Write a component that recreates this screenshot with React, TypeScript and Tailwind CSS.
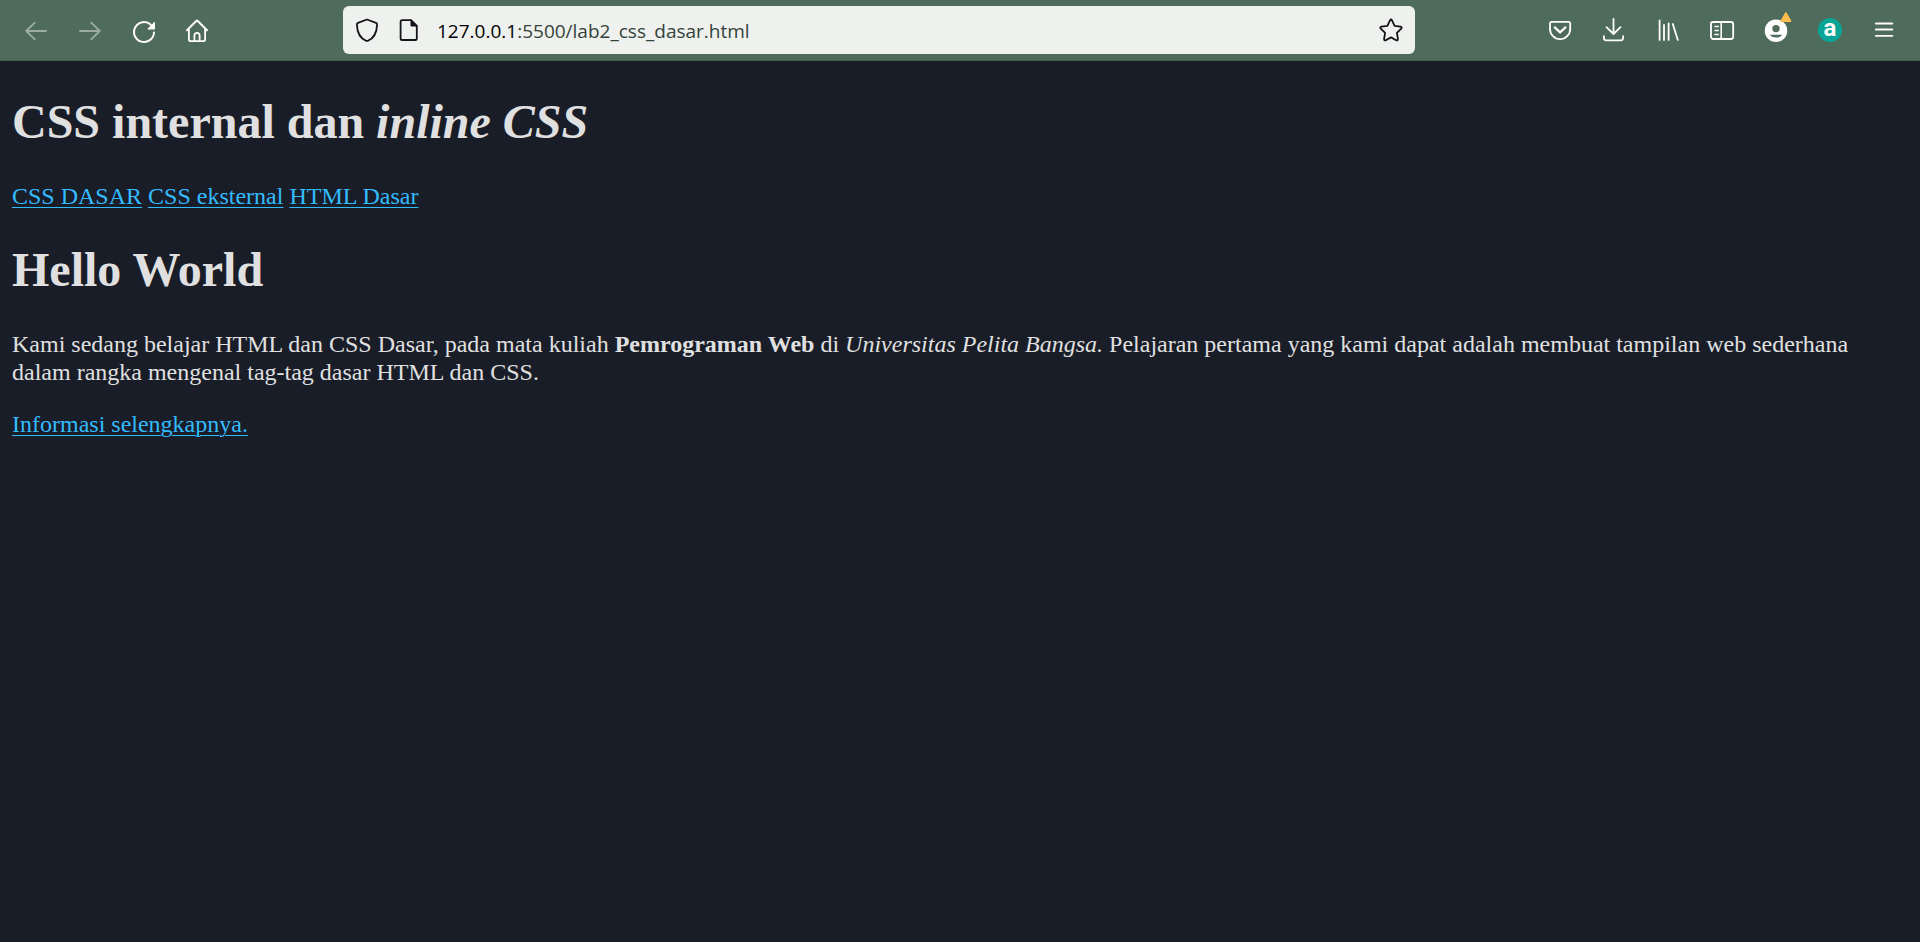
import type { ReactNode } from "react";

function Icon({ children }: { children: ReactNode }) {
  return (
    <svg
      viewBox="0 0 24 24"
      className="size-6 shrink-0 overflow-visible"
      fill="none"
      stroke="currentColor"
      strokeWidth="1.8"
      strokeLinecap="round"
      strokeLinejoin="round"
      aria-hidden="true"
    >
      {children}
    </svg>
  );
}

function ToolButton({ label, disabled, children }: { label: string; disabled?: boolean; children: ReactNode }) {
  return (
    <button
      type="button"
      aria-label={label}
      disabled={disabled}
      className="flex h-12 w-[54px] items-center justify-center text-white disabled:text-[#9bada2]"
    >
      {children}
    </button>
  );
}

function BrowserBar() {
  return (
    <header className="flex h-[61px] items-center border-b border-[#465f50] bg-[#4f6b5b] px-[9px]">
      <nav aria-label="Browser navigation" className="flex">
        <ToolButton label="Back" disabled>
          <Icon>
            <path d="M22 13H2.2M10.8 4.6 2.2 13l8.600 8.400" />
          </Icon>
        </ToolButton>
        <ToolButton label="Forward" disabled>
          <Icon>
            <path d="M2 13h19.800M13.200 4.600 21.800 13l-8.600 8.400" />
          </Icon>
        </ToolButton>
        <ToolButton label="Reload">
          <Icon>
            <path d="M22 14.500A10 10 0 1 1 18.800 6.700" strokeWidth="2" />
            <path d="M22.400 4.600v6.200h-6.200z" fill="currentColor" strokeWidth="1.200" />
          </Icon>
        </ToolButton>
        <ToolButton label="Home">
          <Icon>
            <path d="M1 12.200 10.200 3Q11 2.200 11.800 3L21 12.200" strokeWidth="2" />
            <path d="M2.900 11v10.600q0 1.600 1.600 1.600h13q1.600 0 1.600-1.600V11" />
            <path d="M8.400 23v-5.600a2.600 2.600 0 0 1 5.200 0V23" />
          </Icon>
        </ToolButton>
      </nav>

      <div className="flex-[118]" />
      <form
        className="flex h-12 min-w-0 flex-[1048] items-center rounded-md bg-[#eff1ee] px-3 text-[#15141a]"
        onSubmit={(event) => event.preventDefault()}
      >
        <Icon>
          <path
            d="M12 1.500 21 4.800Q22.200 5.300 22.100 6.600C21.800 14.500 18.500 20.500 12.800 22.800Q12 23.100 11.200 22.800C5.500 20.500 2.200 14.500 1.900 6.600Q1.800 5.300 3 4.800Z"
          />
        </Icon>
        <span className="ml-[18px] flex">
          <Icon>
            <path d="M14 2.200H5.200Q3.600 2.200 3.600 3.800v16.600q0 1.600 1.600 1.600h13q1.600 0 1.600-1.600V8Z" />
            <path d="M14 2.200V8h5.800z" fill="currentColor" strokeWidth="1" />
          </Icon>
        </span>
        <div className="relative ml-4 flex h-full min-w-0 flex-1 items-center font-['Open_Sans','Noto_Sans',sans-serif] text-[19px] leading-7">
          <div
            aria-hidden="true"
            className="absolute inset-x-0 top-0 bottom-0 flex items-center pt-0.5 whitespace-pre text-[#33423a]"
          >
            <span className="text-black">127.0.0.1</span>:5500/lab2_css_dasar.html
          </div>
          <input
            aria-label="Address"
            type="text"
            defaultValue="127.0.0.1:5500/lab2_css_dasar.html"
            className="relative w-full bg-transparent pt-0.5 text-transparent caret-black outline-none"
          />
        </div>
        <button type="button" aria-label="Bookmark this page" className="flex">
          <Icon>
            <path d="M11 2.400q1-1.800 2 0l2.600 5.400 6 .900q1.800.5.600 2l-4.300 4.200 1 6q.1 2-1.700 1.300L12 19.400l-5.200 2.800q-1.800.7-1.700-1.300l1-6-4.300-4.200q-1.200-1.500.6-2l6-.9Z" />
          </Icon>
        </button>
      </form>
      <div className="flex-[118]" />

      <div className="flex">
        <ToolButton label="Save to Pocket">
          <Icon>
            <path d="M3.600 3.900h17q1.600 0 1.600 1.600V11a10.100 10.100 0 0 1-20.200 0V5.500q0-1.600 1.600-1.600Z" />
            <path d="m6.800 9.400 5.300 5 5.300-5" strokeWidth="2.200" />
          </Icon>
        </ToolButton>
        <ToolButton label="Downloads">
          <Icon>
            <path d="M11.500 1v14.600M4.500 9.200l7 6.800 7-6.800M1.900 18.200v1.900q0 2.200 2.200 2.200h14.800q2.200 0 2.200-2.200v-1.900" />
          </Icon>
        </ToolButton>
        <ToolButton label="Library">
          <Icon>
            <path d="M3.600 2.500v19.400M8 7v14.900M12.600 5.500v16.400M16.800 6l5 15.900" />
          </Icon>
        </ToolButton>
        <ToolButton label="Sidebars">
          <Icon>
            <rect x="1" y="4" width="22.200" height="17" rx="2.200" />
            <path d="M11.200 4v17M5 8.500h3.200M5 12.500h3.200M5 16.500h3.200" strokeWidth="1.600" />
          </Icon>
        </ToolButton>
        <ToolButton label="Account">
          <Icon>
            <circle cx="12" cy="12.700" r="11.300" fill="currentColor" stroke="none" />
            <circle cx="12" cy="10.600" r="3.700" fill="#4f6b5b" stroke="none" />
            <path d="M5.600 16.800H18.400Q16 19.600 12 19.600T5.600 16.800Z" fill="#4f6b5b" stroke="none" />
            <path d="M21.900-5 26.600 3.200h-9.400Z" fill="#ffbd4f" stroke="#ffbd4f" strokeWidth="1.600" />
          </Icon>
        </ToolButton>
        <ToolButton label="Extension">
          <span className="flex size-6 items-center justify-center rounded-full bg-[#06a595] pb-1 font-['Roboto',sans-serif] text-2xl leading-none font-bold">
            a
          </span>
        </ToolButton>
        <ToolButton label="Open application menu">
          <Icon>
            <path d="M3.800 5.500h16.600M3.800 11.500h16.600M3.800 17.800h16.600" />
          </Icon>
        </ToolButton>
      </div>
    </header>
  );
}

const pages = ["CSS DASAR", "CSS eksternal", "HTML Dasar"];

export default function App() {
  return (
    <div className="flex min-h-screen flex-col bg-[#191d28]">
      <BrowserBar />
      <main className="flex-1 px-3 pt-[33px] font-['Liberation_Serif',serif] text-2xl leading-7 text-[#e0e0e0]">
        <h1 className="mb-8 text-5xl leading-[56px] font-bold">
          CSS internal dan <i>inline CSS</i>
        </h1>
        <nav aria-label="Pages" className="mb-8 text-[#33bbff]">
          {pages.map((page, index) => (
            <span key={page}>
              {index > 0 && " "}
              <a href="#" className="underline decoration-1 underline-offset-[3px]">
                {page}
              </a>
            </span>
          ))}
        </nav>
        <h1 className="mb-8 text-5xl leading-[56px] font-bold">Hello World</h1>
        <p className="mb-6">
          Kami sedang belajar HTML dan CSS Dasar, pada mata kuliah <b>Pemrograman Web</b> di{" "}
          <i>Universitas Pelita Bangsa.</i> Pelajaran pertama yang kami dapat adalah membuat tampilan web sederhana
          dalam rangka mengenal tag-tag dasar HTML dan CSS.
        </p>
        <a href="#" className="text-[#33bbff] underline decoration-1 underline-offset-[3px]">
          Informasi selengkapnya.
        </a>
      </main>
    </div>
  );
}
